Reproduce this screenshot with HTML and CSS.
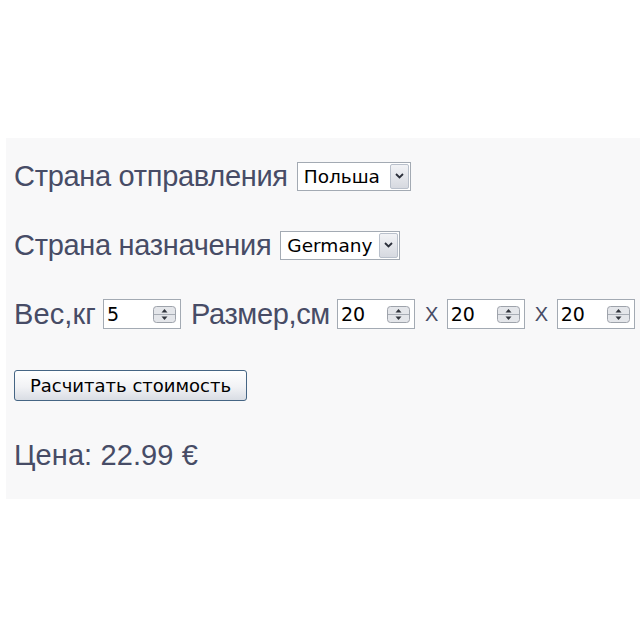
FILE: index.html
```html
<!DOCTYPE html>
<html lang="ru">
<head>
    <meta charset="UTF-8">
    <meta name="viewport" content="width=device-width, initial-scale=1.0">
    <title>Расчёт стоимости доставки</title>
    <link rel="stylesheet" href="styles.css">
</head>
<body>
    <div class="calc">
        <div class="row">
            <span class="label label-country">Страна отправления</span>
            <div class="select select-from">
                <span class="select-value">Польша</span>
                <span class="select-arrow">
                    <svg width="9" height="6" viewBox="0 0 9 6"><path d="M1 1 L4.5 4.5 L8 1" fill="none" stroke="#2b2f3a" stroke-width="1.8"/></svg>
                </span>
            </div>
        </div>

        <div class="row">
            <span class="label label-country">Страна назначения</span>
            <div class="select select-to">
                <span class="select-value">Germany</span>
                <span class="select-arrow">
                    <svg width="9" height="6" viewBox="0 0 9 6"><path d="M1 1 L4.5 4.5 L8 1" fill="none" stroke="#2b2f3a" stroke-width="1.8"/></svg>
                </span>
            </div>
        </div>

        <div class="row">
            <span class="label">Вес,кг</span>
            <div class="num">
                <span class="num-value">5</span>
                <svg class="spin" width="23" height="17" viewBox="0 0 23 17">
                    <rect x="0.5" y="0.5" width="22" height="16" rx="3" fill="#e4e6ea" stroke="#9ea3ab"/>
                    <line x1="1" y1="8.5" x2="22" y2="8.5" stroke="#a8adb5"/>
                    <path d="M8.5 6.5 L11.5 3 L14.5 6.5 Z" fill="#30343c"/>
                    <path d="M8.5 10.5 L11.5 14 L14.5 10.5 Z" fill="#30343c"/>
                </svg>
            </div>
            <span class="label label-size">Размер,см</span>
            <div class="num">
                <span class="num-value">20</span>
                <svg class="spin" width="23" height="17" viewBox="0 0 23 17">
                    <rect x="0.5" y="0.5" width="22" height="16" rx="3" fill="#e4e6ea" stroke="#9ea3ab"/>
                    <line x1="1" y1="8.5" x2="22" y2="8.5" stroke="#a8adb5"/>
                    <path d="M8.5 6.5 L11.5 3 L14.5 6.5 Z" fill="#30343c"/>
                    <path d="M8.5 10.5 L11.5 14 L14.5 10.5 Z" fill="#30343c"/>
                </svg>
            </div>
            <span class="label times">X</span>
            <div class="num">
                <span class="num-value">20</span>
                <svg class="spin" width="23" height="17" viewBox="0 0 23 17">
                    <rect x="0.5" y="0.5" width="22" height="16" rx="3" fill="#e4e6ea" stroke="#9ea3ab"/>
                    <line x1="1" y1="8.5" x2="22" y2="8.5" stroke="#a8adb5"/>
                    <path d="M8.5 6.5 L11.5 3 L14.5 6.5 Z" fill="#30343c"/>
                    <path d="M8.5 10.5 L11.5 14 L14.5 10.5 Z" fill="#30343c"/>
                </svg>
            </div>
            <span class="label times">X</span>
            <div class="num">
                <span class="num-value">20</span>
                <svg class="spin" width="23" height="17" viewBox="0 0 23 17">
                    <rect x="0.5" y="0.5" width="22" height="16" rx="3" fill="#e4e6ea" stroke="#9ea3ab"/>
                    <line x1="1" y1="8.5" x2="22" y2="8.5" stroke="#a8adb5"/>
                    <path d="M8.5 6.5 L11.5 3 L14.5 6.5 Z" fill="#30343c"/>
                    <path d="M8.5 10.5 L11.5 14 L14.5 10.5 Z" fill="#30343c"/>
                </svg>
            </div>
        </div>

        <div class="row row-btn">
            <button class="calc-btn">Расчитать стоимость</button>
        </div>

        <div class="row row-price">
            <span class="label">Цена: 22.99 €</span>
        </div>
    </div>
</body>
</html>
```

FILE: styles.css
```css
/* Global */
body, html {
    margin: 0;
    padding: 0;
    background: #ffffff;
    font-family: 'Liberation Sans', Arial, sans-serif;
}

/* Calculator panel */
.calc {
    margin: 138px 0 0 6px;
    padding: 0 0 0 8px;
    height: 361px;
    background: #f8f8f9;
    display: flex;
    flex-direction: column;
    overflow: hidden;
}

.row {
    display: flex;
    align-items: center;
    height: 30px;
    margin-top: 39px;
    white-space: nowrap;
}

.row:first-child {
    margin-top: 23px;
}

.row-btn {
    margin-top: 41px;
}

.row-price {
    margin-top: 40px;
}

.label {
    font-size: 29px;
    color: #474c66;
    letter-spacing: 0.1px;
    flex-shrink: 0;
}

.label-country {
    letter-spacing: -0.3px;
}

.label-size {
    letter-spacing: -0.35px;
}

/* Select boxes */
.select {
    display: flex;
    align-items: center;
    flex-shrink: 0;
    height: 29px;
    box-sizing: border-box;
    border: 1px solid #a3aab3;
    background: #ffffff;
    margin-left: 9px;
}

.select-from {
    width: 114px;
}

.select-to {
    width: 120px;
}

.select-value {
    flex: 1;
    padding-left: 6px;
    font-family: 'DejaVu Sans', Tahoma, sans-serif;
    font-size: 18.5px;
    color: #000000;
}

.select-arrow {
    display: flex;
    align-items: center;
    justify-content: center;
    width: 19px;
    height: 25px;
    margin-right: 1px;
    box-sizing: border-box;
    border: 1px solid #b9c0cb;
    border-radius: 2px;
    background: linear-gradient(to bottom, #f2f3f6, #d6d9e0);
}

/* Number fields */
.num {
    display: flex;
    align-items: center;
    flex-shrink: 0;
    height: 30px;
    width: 78px;
    box-sizing: border-box;
    border: 1px solid #a3aab3;
    background: #ffffff;
    margin: 0 10px 0 7px;
}

.num-value {
    flex: 1;
    padding-left: 3px;
    font-family: 'DejaVu Sans', Tahoma, sans-serif;
    font-size: 19px;
    color: #000000;
}

.spin {
    margin-right: 4px;
}

.times {
    font-size: 20px;
    letter-spacing: -1.5px;
    margin-right: 3px;
}

/* Button */
.calc-btn {
    width: 233px;
    height: 31px;
    padding: 0;
    border: 1px solid #456584;
    border-radius: 3px;
    background: linear-gradient(to bottom, #ffffff 0%, #f1f2f5 55%, #d9dde4 100%);
    font-family: 'DejaVu Sans', Tahoma, sans-serif;
    font-size: 18px;
    color: #000000;
    cursor: pointer;
}
```
